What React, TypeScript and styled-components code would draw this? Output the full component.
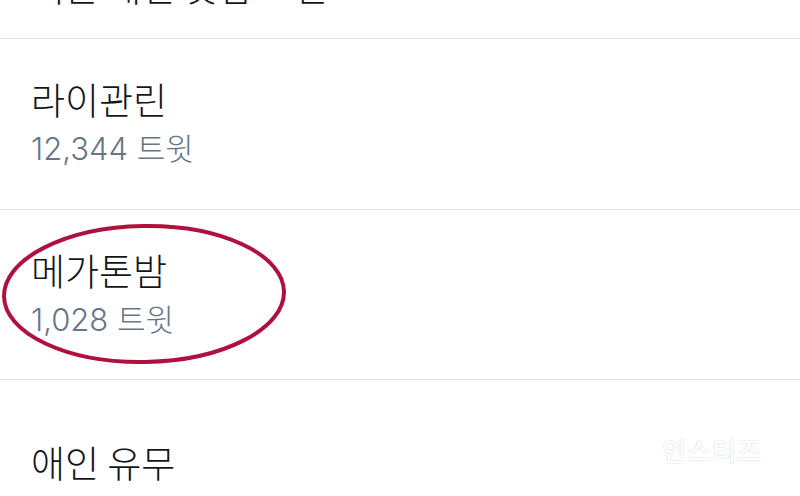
import React from "react";
import styled, { createGlobalStyle } from "styled-components";

const Global = createGlobalStyle`
  html, body { margin: 0; padding: 0; background: #ffffff; }
  body { font-family: "Noto Sans CJK KR", "Noto Sans", sans-serif; overflow: hidden; }
`;

const Page = styled.div`
  position: relative;
  width: 800px;
  height: 496px;
  overflow: hidden;
  background: #ffffff;
`;

const List = styled.ul`
  list-style: none;
  margin: 0;
  padding: 0;
`;

const Row = styled.li<{ $h: number; $pt: number }>`
  position: relative;
  box-sizing: border-box;
  height: ${(p) => p.$h}px;
  padding: ${(p) => p.$pt}px 0 0 31px;
  border-bottom: 1px solid #dfe5ea;
  display: flex;
  flex-direction: column;
`;

const Title = styled.div<{ $shift?: number }>`
  margin-top: ${(p) => p.$shift ?? 0}px;
  font-family: "Noto Sans CJK KR", sans-serif;
  font-size: 37px;
  font-weight: 300;
  line-height: 46px;
  color: #14171a;
  white-space: nowrap;
`;

const Count = styled.div`
  margin-top: 7px;
  font-family: "Inter", "Noto Sans CJK KR", sans-serif;
  font-size: 31px;
  font-weight: 300;
  line-height: 40px;
  color: #657786;
  white-space: nowrap;
`;

const Circle = styled.svg`
  position: absolute;
  left: 0;
  top: 222px;
  overflow: visible;
  pointer-events: none;
`;

const Watermark = styled.div`
  position: absolute;
  right: 38px;
  bottom: 28px;
  font-size: 26px;
  font-weight: 500;
  color: #ffffff;
  letter-spacing: 1px;
  text-shadow: 0 0 1px #c9ced3, 0 0 2px #e2e5e8;
`;

export default function App() {
  return (
    <Page>
      <Global />
      <List>
        <Row $h={39} $pt={0}>
          <Title $shift={-37}>서든 대전 짓업 그런즈</Title>
        </Row>
        <Row $h={171} $pt={37}>
          <Title>라이관린</Title>
          <Count>12,344 트윗</Count>
        </Row>
        <Row $h={170} $pt={37}>
          <Title>메가톤밤</Title>
          <Count>1,028 트윗</Count>
        </Row>
        <Row $h={170} $pt={59}>
          <Title>애인 유무</Title>
        </Row>
      </List>
      <Circle width="290" height="145" viewBox="0 0 290 145">
        <ellipse
          cx="144"
          cy="72"
          rx="140"
          ry="68"
          fill="none"
          stroke="#b0103e"
          strokeWidth="4"
          transform="rotate(-1 144 72)"
        />
      </Circle>
      <Watermark>인스티즈</Watermark>
    </Page>
  );
}
